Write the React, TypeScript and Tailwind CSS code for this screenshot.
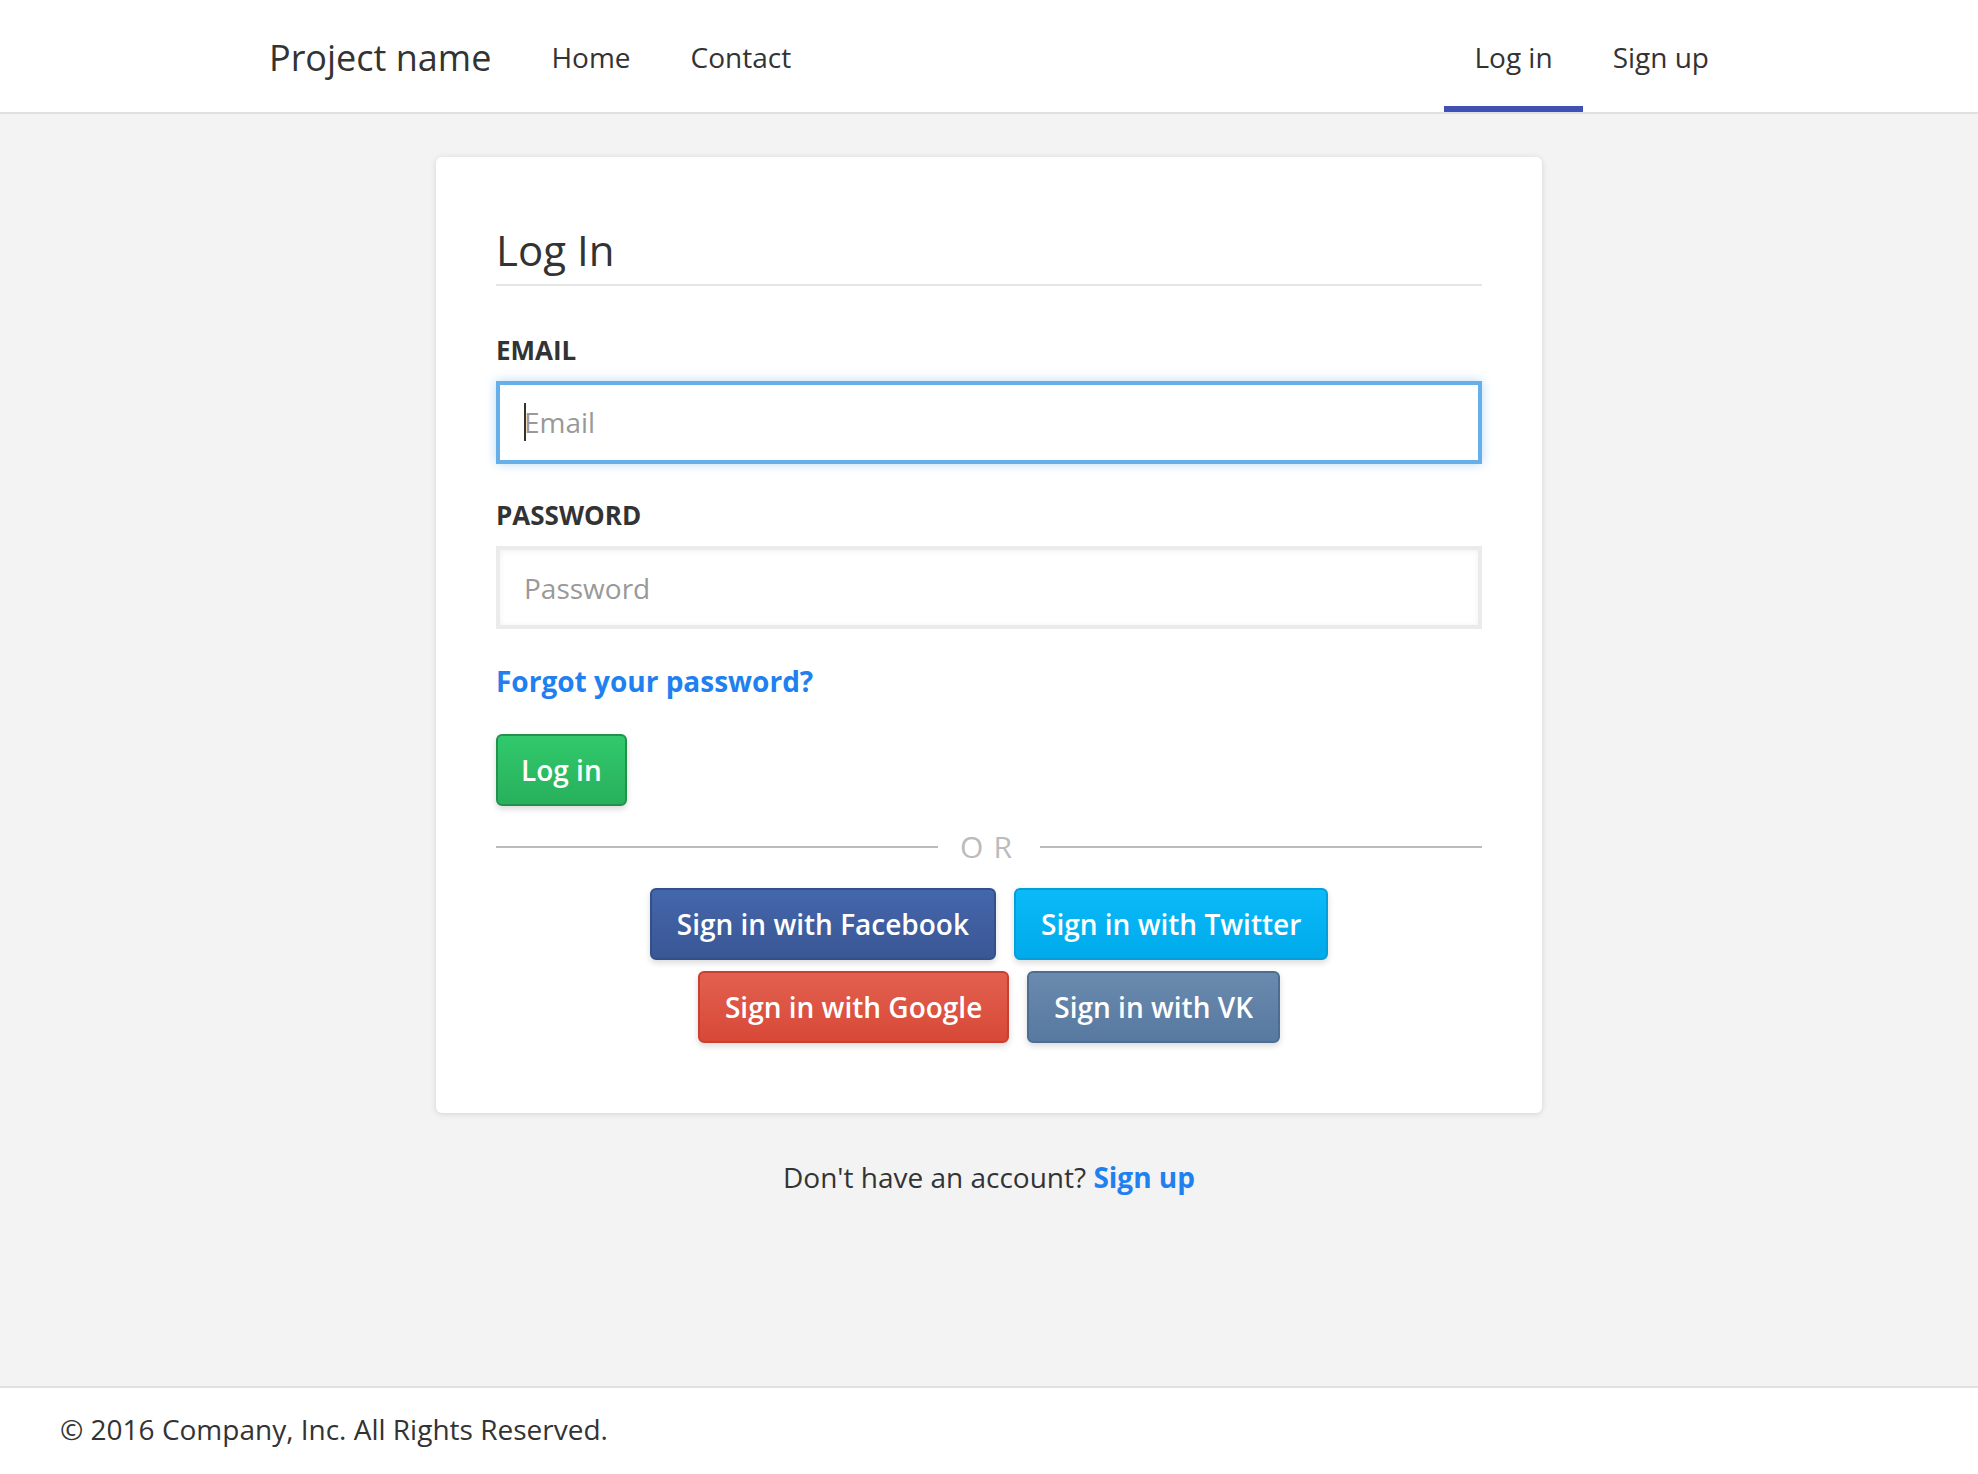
import React from 'react';

const socialRows = [
  [
    { label: 'Sign in with Facebook', cls: 'from-[#4466ab] to-[#3a5795] border-[#33508a]' },
    { label: 'Sign in with Twitter', cls: 'from-[#0bbaf8] to-[#00aaeb] border-[#029fdc]' },
  ],
  [
    { label: 'Sign in with Google', cls: 'from-[#e2604f] to-[#d84837] border-[#c8402f]' },
    { label: 'Sign in with VK', cls: 'from-[#6a8aae] to-[#5879a0] border-[#4e6d92]' },
  ],
];

function NavItem({ label, active = false }: { label: string; active?: boolean }) {
  return (
    <a href="#" className="relative flex h-full items-center px-[30px] pt-[2px] text-[28px] text-[#333]">
      {label}
      {active && <span className="absolute bottom-0 left-0 right-0 h-[6px] bg-[#3f51b5]" />}
    </a>
  );
}

export default function App() {
  return (
    <div className="flex min-h-screen flex-col bg-[#f3f3f3] font-['Open_Sans',sans-serif] text-[#333]">
      {/* Navbar */}
      <header className="h-[114px] border-b-2 border-[#e0e0e0] bg-white">
        <div className="mx-auto flex h-[112px] w-[1500px]">
          <a href="#" className="flex items-center px-[30px] pt-[4px] text-[36px] text-[#333]">
            Project name
          </a>
          <NavItem label="Home" />
          <NavItem label="Contact" />
          <div className="ml-auto flex h-full">
            <NavItem label="Log in" active />
            <NavItem label="Sign up" />
          </div>
        </div>
      </header>

      <main className="flex-1">
        {/* Card */}
        <div className="mx-auto mt-[43px] w-[1106px] rounded-[6px] bg-white px-[60px] pb-[70px] pt-[70px] shadow-[0_1px_6px_rgba(0,0,0,0.13)]">
          <h1 className="border-b-2 border-[#e5e5e5] pb-[11px] text-[42px] leading-[46px] font-normal text-[#333]">
            Log In
          </h1>

          <label className="mt-[46px] mb-[13px] block text-[26px] leading-[36px] font-bold text-[#333]">EMAIL</label>
          <div className="relative">
            <input
              type="email"
              placeholder="Email"
              className="block h-[83px] w-full border-4 border-[#66afe9] bg-white pb-[2px] pl-[24px] text-[28px] text-[#333] shadow-[0_0_10px_rgba(102,175,233,0.45)] outline-none placeholder:text-[#999]"
            />
            <span className="absolute left-[28px] top-[22px] h-[38px] w-[2px] bg-[#333]" />
          </div>

          <label className="mt-[33px] mb-[13px] block text-[26px] leading-[36px] font-bold text-[#333]">PASSWORD</label>
          <input
            type="password"
            placeholder="Password"
            className="block h-[83px] w-full border-4 border-[#ebebeb] bg-white pl-[24px] text-[28px] text-[#333] shadow-[inset_0_1px_6px_rgba(0,0,0,0.06)] outline-none placeholder:text-[#999]"
          />

          <a href="#" className="mt-[32px] block w-fit text-[28px] leading-[40px] font-bold text-[#2080f0]">
            Forgot your password?
          </a>

          <button className="mt-[33px] flex h-[72px] items-center rounded-[6px] border-2 border-[#22914c] bg-linear-to-b from-[#31c96c] to-[#28b05c] px-[23px] text-[28px] font-semibold text-white shadow-[0_3px_6px_rgba(0,0,0,0.15)]">
            Log in
          </button>

          {/* OR divider */}
          <div className="mt-[21px] flex h-[40px] items-center">
            <div className="h-[2px] flex-1 bg-[#bbb]" />
            <span className="pl-[22px] pr-[18px] text-[30px] leading-[40px] tracking-[10px] text-[#bbb]">OR</span>
            <div className="h-[2px] flex-1 bg-[#bbb]" />
          </div>

          {/* Social buttons */}
          <div className="mt-[21px] flex flex-col gap-[11px]">
            {socialRows.map((row, i) => (
              <div key={i} className="flex justify-center gap-[18px]">
                {row.map((b) => (
                  <button
                    key={b.label}
                    className={`flex h-[72px] items-center rounded-[6px] border-2 bg-linear-to-b px-[25px] text-[28px] font-semibold text-white shadow-[0_3px_6px_rgba(0,0,0,0.15)] ${b.cls}`}
                  >
                    {b.label}
                  </button>
                ))}
              </div>
            ))}
          </div>
        </div>

        <p className="mt-[44px] text-center text-[28px] leading-[40px] text-[#333]">
          Don't have an account?{' '}
          <a href="#" className="font-bold text-[#2080f0]">
            Sign up
          </a>
        </p>
      </main>

      {/* Footer */}
      <footer className="border-t-2 border-[#e0e0e0] bg-white px-[60px] pb-[25px] pt-[21px]">
        <p className="text-[28px] leading-[40px] text-[#333]">© 2016 Company, Inc. All Rights Reserved.</p>
      </footer>
    </div>
  );
}
